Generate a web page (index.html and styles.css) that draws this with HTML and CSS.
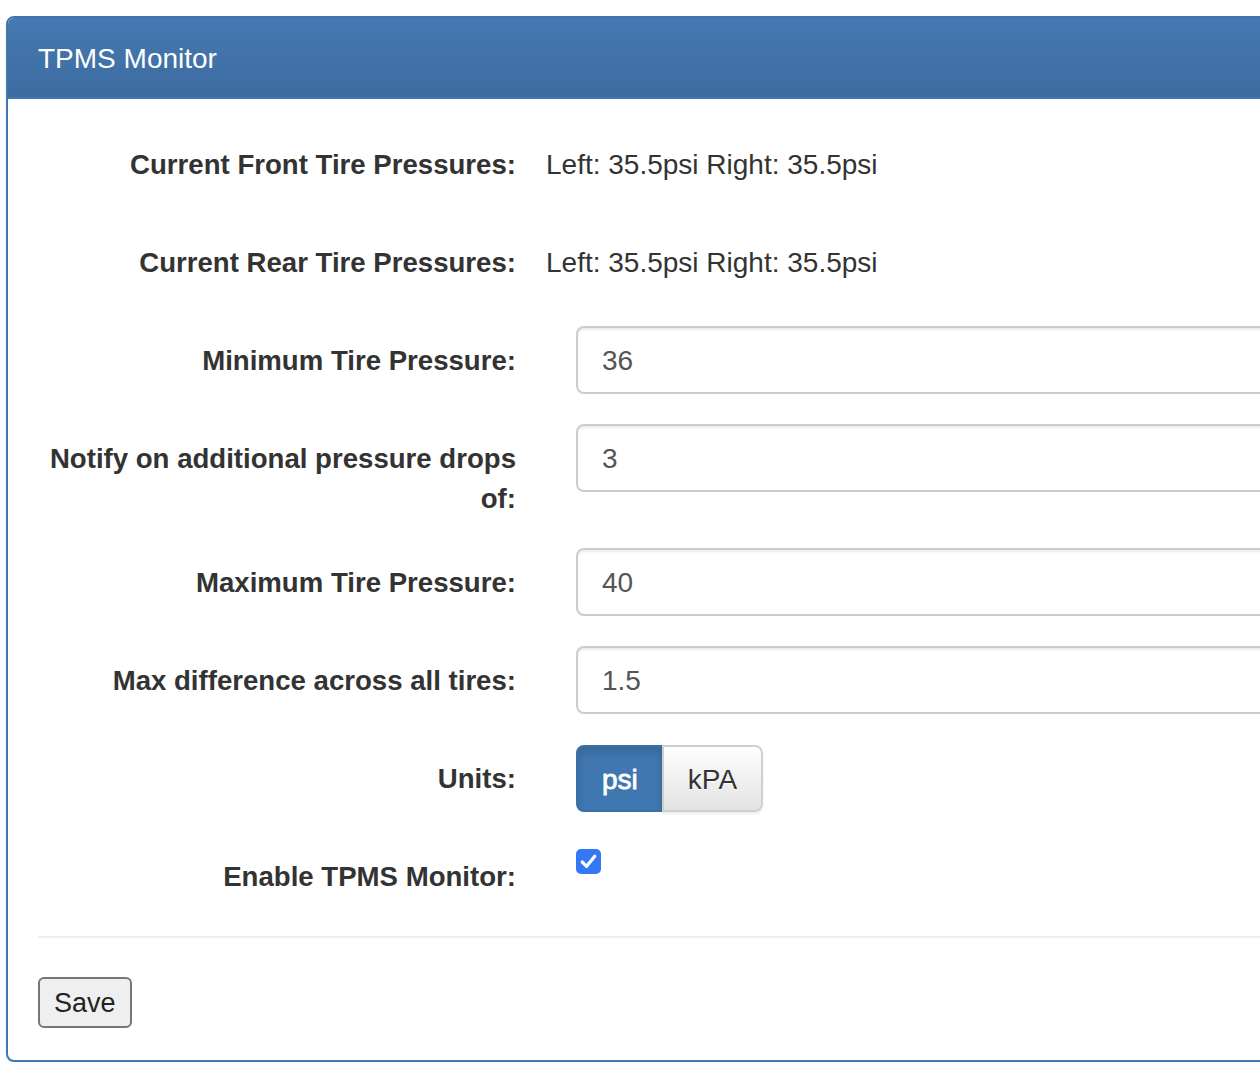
FILE: index.html
```html
<!DOCTYPE html>
<html lang="en">
<head>
<meta charset="utf-8">
<title>TPMS Monitor</title>
<link rel="stylesheet" href="styles.css">
</head>
<body>
<div class="page">
  <div class="panel">
    <div class="panel-heading">TPMS Monitor</div>
    <div class="panel-body">
      <form class="form">
        <div class="form-row">
          <label class="lbl">Current Front Tire Pressures:</label>
          <div class="val"><p class="static">Left: 35.5psi Right: 35.5psi</p></div>
        </div>
        <div class="form-row">
          <label class="lbl">Current Rear Tire Pressures:</label>
          <div class="val"><p class="static">Left: 35.5psi Right: 35.5psi</p></div>
        </div>
        <div class="form-row">
          <label class="lbl">Minimum Tire Pressure:</label>
          <div class="val"><input class="form-control" type="text" value="36"></div>
        </div>
        <div class="form-row">
          <label class="lbl">Notify on additional pressure drops of:</label>
          <div class="val"><input class="form-control" type="text" value="3"></div>
        </div>
        <div class="form-row">
          <label class="lbl">Maximum Tire Pressure:</label>
          <div class="val"><input class="form-control" type="text" value="40"></div>
        </div>
        <div class="form-row">
          <label class="lbl">Max difference across all tires:</label>
          <div class="val"><input class="form-control" type="text" value="1.5"></div>
        </div>
        <div class="form-row">
          <label class="lbl">Units:</label>
          <div class="val">
            <div class="btn-group">
              <span class="btn btn-active">psi</span>
              <span class="btn btn-default">kPA</span>
            </div>
          </div>
        </div>
        <div class="form-row">
          <label class="lbl">Enable TPMS Monitor:</label>
          <div class="val">
            <span class="check"><svg viewBox="0 0 26 26" width="25" height="25"><path d="M6.5 13.5 L11 18 L19.5 7.5" fill="none" stroke="#fff" stroke-width="3.4" stroke-linecap="round" stroke-linejoin="round"/></svg></span>
          </div>
        </div>
      </form>
      <hr class="divider">
      <button class="save" type="button">Save</button>
    </div>
  </div>
</div>
</body>
</html>
```

FILE: styles.css
```css
html, body {
  margin: 0;
  padding: 0;
  overflow: hidden;
  background: #fff;
}

body {
  font-family: "Liberation Sans", Arial, Helvetica, sans-serif;
  font-size: 28px;
  line-height: 40px;
  color: #333;
}

.page {
  padding: 16px 0 0 6px;
  width: 1700px;
}

.panel {
  width: 1616px;
  border: 2px solid #3f77b3;
  border-radius: 8px;
  box-shadow: 0 2px 4px rgba(0, 0, 0, 0.05);
  background: #fff;
}

.panel-heading {
  padding: 21px 30px 18px;
  color: #fff;
  font-size: 28px;
  line-height: 40px;
  background: linear-gradient(to bottom, #4579b1 0%, #3d6ca0 100%);
  border-bottom: 2px solid #4275ad;
  border-radius: 6px 6px 0 0;
}

.panel-body {
  padding: 31px 30px 32px;
}

.form {
  margin: 0;
}

.form-row {
  display: grid;
  grid-template-columns: 478px 1fr;
  column-gap: 60px;
  margin-bottom: 30px;
}

.lbl {
  padding-top: 15px;
  margin-bottom: -1px;
  font-size: 27.6px;
  font-weight: bold;
  text-align: right;
  color: #333;
}

.val {
  min-width: 0;
}

.static {
  margin: 0 0 0 -30px;
  padding: 15px 0 13px;
  min-height: 40px;
}

.form-control {
  display: block;
  box-sizing: border-box;
  width: 100%;
  height: 68px;
  margin: 0;
  padding: 13px 24px 11px;
  font-family: inherit;
  font-size: 28px;
  line-height: 40px;
  color: #555;
  background: #fff;
  border: 2px solid #ccc;
  border-radius: 8px;
  box-shadow: inset 0 2px 2px rgba(0, 0, 0, 0.075);
  outline: none;
}

.btn-group {
  display: inline-flex;
  margin-top: 1px;
}

.btn {
  box-sizing: border-box;
  display: inline-block;
  height: 67px;
  padding: 13px 24px 10px;
  font-size: 28px;
  line-height: 40px;
  border: 2px solid #ccc;
}

.btn-active {
  color: #fff;
  background: #4077b0;
  border-color: #3b6fa6;
  border-radius: 8px 0 0 8px;
  box-shadow: inset 0 6px 10px rgba(0, 0, 0, 0.125);
  -webkit-text-stroke: 0.8px #fff;
  text-shadow: 0 -1px 0 rgba(0, 0, 0, 0.2);
}

.btn-default {
  margin-left: -2px;
  color: #333;
  background: linear-gradient(to bottom, #ffffff 0%, #e2e2e2 100%);
  border-color: #d0d0d0;
  border-radius: 0 8px 8px 0;
  box-shadow: inset 0 2px 0 rgba(255, 255, 255, 0.15), 0 2px 2px rgba(0, 0, 0, 0.075);
  text-shadow: 0 1px 0 #fff;
}

.check {
  display: block;
  width: 25px;
  height: 25px;
  margin-top: 7px;
  margin-left: 0;
  background: #3478f6;
  border-radius: 5px;
}

.check svg {
  display: block;
}

.divider {
  margin: 40px 0 39px;
  height: 0;
  border: 0;
  border-top: 2px solid #eee;
}

.save {
  display: block;
  margin: 0;
  padding: 8px 14px 6px;
  font-family: inherit;
  font-size: 27px;
  line-height: 33px;
  color: #222;
  background: #efefef;
  border: 2px solid #767676;
  border-radius: 6px;
}
```
